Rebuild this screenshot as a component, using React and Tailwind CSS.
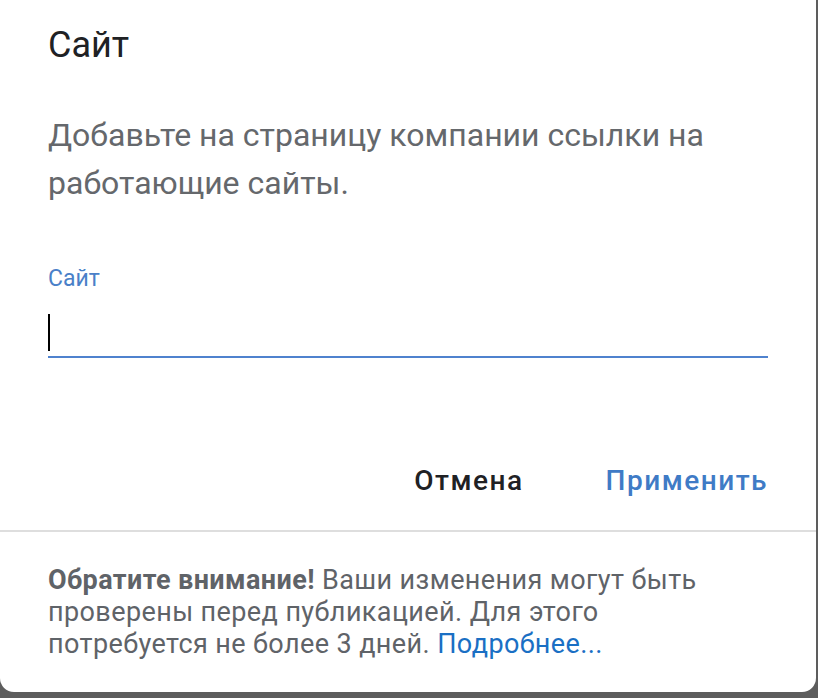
import React from 'react';

const App = () => {
  return (
    <div className="w-[818px] h-[698px] bg-[#5d5d5d] overflow-hidden" style={{ fontFamily: 'Roboto, "Noto Sans", sans-serif' }}>
      <div className="w-[816px] h-[692px] bg-white rounded-b-[14px] flex flex-col">
        <div className="px-12 pt-[22px]">
          <h1 className="text-[36px] leading-[46px] text-[#202124] font-normal">Сайт</h1>
          <p className="mt-[43px] text-[32px] leading-[48px] text-[#65686c] w-[720px]">
            Добавьте на страницу компании ссылки на работающие сайты.
          </p>

          <div className="mt-[58px] w-[720px]">
            <label className="block text-[23px] leading-[28px] text-[#4a80c8]">Сайт</label>
            <div className="mt-[21px] h-[44px] border-b-2 border-[#4f82ce] flex items-start">
              <span className="w-[2px] h-[37px] bg-black"></span>
            </div>
          </div>

          <div className="mt-[106px] flex justify-end items-center gap-[82px] w-[720px]">
            <button className="text-[28px] leading-[34px] font-medium tracking-[1.5px] text-[#202124]">Отмена</button>
            <button className="text-[28px] leading-[34px] font-medium tracking-[1.5px] text-[#3f7bc6]">Применить</button>
          </div>
        </div>

        <div className="mt-[32px] h-[2px] bg-[#dedede]"></div>

        <div className="px-12 pt-[32px]">
          <p className="text-[27px] leading-[32px] tracking-[0.4px] text-[#5f6368] w-[670px]">
            <span className="font-bold">Обратите внимание!</span> Ваши изменения могут быть проверены перед публикацией. Для этого потребуется не более 3 дней.{' '}
            <a className="text-[#1a6fc4]">Подробнее...</a>
          </p>
        </div>
      </div>
    </div>
  );
};

export default App;
